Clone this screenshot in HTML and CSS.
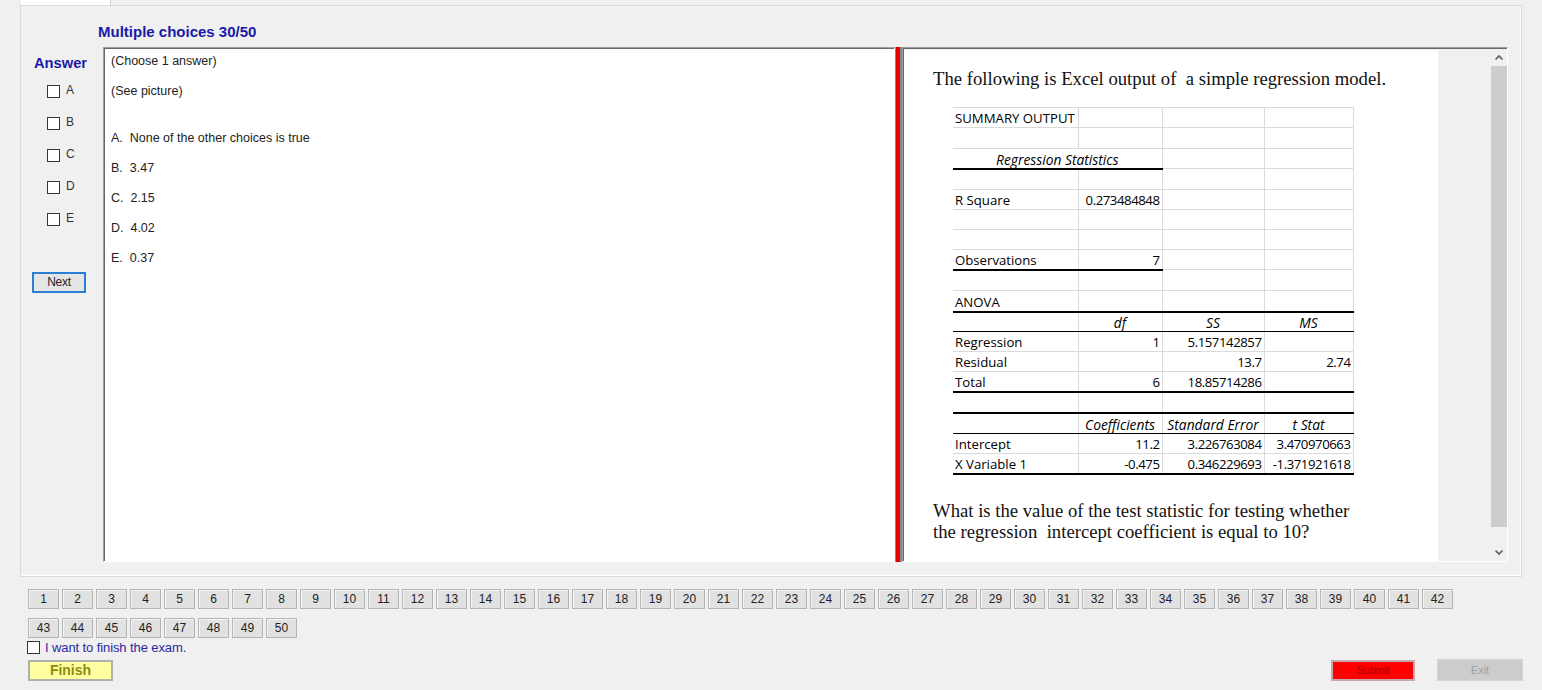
FILE: index.html
```html
<!DOCTYPE html>
<html>
<head>
<meta charset="utf-8">
<title>Exam</title>
<link rel="stylesheet" href="styles.css">
</head>
<body>
<div class="tabstrip"><div class="tab"></div></div>
<div class="group">
  <div class="title">Multiple choices 30/50</div>
  <div class="main">
    <div class="answer-col">
      <div class="answer-label">Answer</div>
      <div class="options">
        <div class="opt"><span class="box"></span><span class="opt-label">A</span></div>
        <div class="opt"><span class="box"></span><span class="opt-label">B</span></div>
        <div class="opt"><span class="box"></span><span class="opt-label">C</span></div>
        <div class="opt"><span class="box"></span><span class="opt-label">D</span></div>
        <div class="opt"><span class="box"></span><span class="opt-label">E</span></div>
      </div>
      <div class="next">Next</div>
    </div>
    <div class="textbox">
      <div class="line">(Choose 1 answer)</div>
      <div class="line">(See picture)</div>
      <div class="line first-choice">A.&nbsp; None of the other choices is true</div>
      <div class="line">B.&nbsp; 3.47</div>
      <div class="line">C.&nbsp; 2.15</div>
      <div class="line">D.&nbsp; 4.02</div>
      <div class="line">E.&nbsp; 0.37</div>
    </div>
    <div class="divider"></div>
    <div class="pane">
      <div class="sheet">
        <p class="intro">The following is Excel output of&nbsp; a simple regression model.</p>
        <table class="xl">
          <colgroup><col class="c0"><col class="c1"><col class="c2"><col class="c3"></colgroup>
          <tr><td>SUMMARY OUTPUT</td><td></td><td></td><td></td></tr>
          <tr class="h21"><td class="tb2"></td><td class="tb2"></td><td></td><td></td></tr>
          <tr><td colspan="2" class="hd bb2">Regression Statistics</td><td></td><td></td></tr>
          <tr class="h21"><td></td><td></td><td></td><td></td></tr>
          <tr><td>R Square</td><td class="num">0.273484848</td><td></td><td></td></tr>
          <tr><td></td><td></td><td></td><td></td></tr>
          <tr><td></td><td></td><td></td><td></td></tr>
          <tr><td class="bb2">Observations</td><td class="num bb2">7</td><td></td><td></td></tr>
          <tr class="h21"><td></td><td></td><td></td><td></td></tr>
          <tr class="h21"><td class="bb2">ANOVA</td><td class="bb2"></td><td class="bb2"></td><td class="bb2"></td></tr>
          <tr><td class="bb1"></td><td class="hd bb1">df</td><td class="hd bb1">SS</td><td class="hd bb1">MS</td></tr>
          <tr><td>Regression</td><td class="num">1</td><td class="num">5.157142857</td><td></td></tr>
          <tr><td>Residual</td><td></td><td class="num">13.7</td><td class="num">2.74</td></tr>
          <tr><td class="bb2">Total</td><td class="num bb2">6</td><td class="num bb2">18.85714286</td><td class="bb2"></td></tr>
          <tr class="h21"><td class="bb2"></td><td class="bb2"></td><td class="bb2"></td><td class="bb2"></td></tr>
          <tr class="h21"><td class="bb1"></td><td class="hd bb1">Coefficients</td><td class="hd bb1">Standard Error</td><td class="hd bb1">t Stat</td></tr>
          <tr><td>Intercept</td><td class="num">11.2</td><td class="num">3.226763084</td><td class="num">3.470970663</td></tr>
          <tr><td class="bb2">X Variable 1</td><td class="num bb2">-0.475</td><td class="num bb2">0.346229693</td><td class="num bb2">-1.371921618</td></tr>
        </table>
        <p class="question">What is the value of the test statistic for testing whether<br>the regression&nbsp; intercept coefficient is equal to 10?</p>
      </div>
      <div class="pane-gap"></div>
      <div class="scrollbar">
        <div class="arrow">
          <svg width="16" height="17" viewBox="0 0 16 17"><polyline points="4.5,10.5 8,7 11.5,10.5" fill="none" stroke="#606060" stroke-width="1.7"/></svg>
        </div>
        <div class="thumb"></div>
        <div class="track"></div>
        <div class="arrow">
          <svg width="16" height="17" viewBox="0 0 16 17"><polyline points="4.5,6.5 8,10 11.5,6.5" fill="none" stroke="#606060" stroke-width="1.7"/></svg>
        </div>
      </div>
    </div>
  </div>
</div>
<div class="numbers">
  <div class="nb">1</div><div class="nb">2</div><div class="nb">3</div><div class="nb">4</div><div class="nb">5</div><div class="nb">6</div><div class="nb">7</div><div class="nb">8</div><div class="nb">9</div><div class="nb">10</div>
  <div class="nb">11</div><div class="nb">12</div><div class="nb">13</div><div class="nb">14</div><div class="nb">15</div><div class="nb">16</div><div class="nb">17</div><div class="nb">18</div><div class="nb">19</div><div class="nb">20</div>
  <div class="nb">21</div><div class="nb">22</div><div class="nb">23</div><div class="nb">24</div><div class="nb">25</div><div class="nb">26</div><div class="nb">27</div><div class="nb">28</div><div class="nb">29</div><div class="nb">30</div>
  <div class="nb">31</div><div class="nb">32</div><div class="nb">33</div><div class="nb">34</div><div class="nb">35</div><div class="nb">36</div><div class="nb">37</div><div class="nb">38</div><div class="nb">39</div><div class="nb">40</div>
  <div class="nb">41</div><div class="nb">42</div><div class="nb">43</div><div class="nb">44</div><div class="nb">45</div><div class="nb">46</div><div class="nb">47</div><div class="nb">48</div><div class="nb">49</div><div class="nb">50</div>
</div>
<div class="finish-check"><span class="box"></span><span class="finish-text">I want to finish the exam.</span></div>
<div class="actions">
  <div class="finish">Finish</div>
  <div class="spacer"></div>
  <div class="submit">Submit</div>
  <div class="exit">Exit</div>
</div>
</body>
</html>
```
FILE: styles.css
```css
* { box-sizing: border-box; }
html, body { margin: 0; padding: 0; }
body {
  width: 1542px;
  height: 690px;
  overflow: hidden;
  background: #f0f0f0;
  font-family: "Liberation Sans", Arial, sans-serif;
  font-size: 12.5px;
  color: #222;
}
.tabstrip { height: 5px; }
.tab {
  margin-left: 21px;
  width: 90px;
  height: 5px;
  background: #ffffff;
  border-right: 1px solid #d0d0d0;
}
.group {
  margin-left: 20px;
  width: 1502px;
  height: 572px;
  border: 1px solid #d9d9d9;
  box-shadow: inset -1px -1px 0 #ffffff;
  padding-top: 17px;
}
.title {
  padding-left: 77px;
  font-weight: bold;
  font-size: 15px;
  line-height: 18px;
  color: #1a1aa8;
}
.main {
  display: flex;
  margin-top: 6px;
  height: 515px;
}
.answer-col {
  width: 82px;
  flex: none;
  display: flex;
  flex-direction: column;
}
.answer-label {
  margin-top: 7px;
  padding-left: 13px;
  font-weight: bold;
  font-size: 14.7px;
  line-height: 18px;
  color: #1a1aa8;
}
.options {
  margin-top: 13px;
  display: flex;
  flex-direction: column;
  gap: 19px;
  padding-left: 26px;
}
.opt {
  display: flex;
  align-items: center;
  height: 13px;
}
.box {
  display: inline-block;
  width: 13px;
  height: 13px;
  border: 1px solid #333;
  background: #fff;
  flex: none;
}
.opt-label {
  margin-left: 6px;
  font-size: 12px;
  color: #333;
  position: relative;
  top: -2px;
}
.next {
  margin-top: 46px;
  margin-left: 11px;
  width: 54px;
  height: 21px;
  border: 2px solid #2a7fd4;
  background: #e5e5e5;
  font-size: 12px;
  line-height: 17px;
  text-align: center;
  color: #222;
  letter-spacing: -0.3px;
}
.textbox {
  width: 792px;
  flex: none;
  background: #fff;
  border-top: 1px solid #a0a0a0;
  border-left: 1px solid #a0a0a0;
  border-right: 1px solid #ffffff;
  border-bottom: 1px solid #ffffff;
  box-shadow: inset 1px 1px 0 #696969;
  padding: 5px 0 0 7px;
}
.line {
  line-height: 16px;
  height: 16px;
  margin-bottom: 14px;
  color: #222;
}
.line.first-choice { margin-top: 31px; }
.divider {
  width: 7px;
  flex: none;
  background: #e60000;
  border-left: 1px solid #8a8a8a;
  border-right: 2px solid #8a8a8a;
}
.pane {
  width: 606px;
  flex: none;
  display: flex;
  border-top: 1px solid #a0a0a0;
  border-left: 1px solid #a0a0a0;
  border-right: 1px solid #ffffff;
  border-bottom: 1px solid #ffffff;
  box-shadow: inset 1px 1px 0 #696969;
  padding: 2px 0 0 1px;
  background: #f0f0f0;
}
.sheet {
  width: 534px;
  flex: none;
  background: #fff;
  padding: 18px 0 0 29px;
  overflow: hidden;
  font-family: "Liberation Serif", "Times New Roman", serif;
  color: #111;
}
.intro {
  margin: 0;
  font-size: 18.7px;
  line-height: 21px;
}
.question {
  margin: 25px 0 0 0;
  font-size: 18.7px;
  line-height: 21px;
}
.pane-gap { flex: 1; }
.scrollbar {
  width: 16px;
  flex: none;
  display: flex;
  flex-direction: column;
  background: #f0f0f0;
  margin-top: -1px;
}
.arrow { height: 17px; flex: none; display: flex; }
.thumb { height: 461px; flex: none; background: #cdcdcd; }
.track { flex: 1; }

table.xl {
  margin: 18px 0 0 20px;
  border-collapse: collapse;
  table-layout: fixed;
  width: 400px;
  font-family: "Open Sans", "Liberation Sans", sans-serif;
  font-size: 13.2px;
  color: #000;
}
col.c0 { width: 125px; }
col.c1 { width: 84px; }
col.c2 { width: 102px; }
col.c3 { width: 89px; }
table.xl tr { height: 20px; }
table.xl tr.h21 { height: 21px; }
table.xl td {
  border: 1px solid #dadada;
  padding: 0 2px;
  line-height: 17px;
  white-space: nowrap;
  overflow: hidden;
  vertical-align: bottom;
}
table.xl td:first-child { border-left: none; }
table.xl td.num { text-align: right; letter-spacing: -0.45px; }
table.xl td.hd { text-align: center; font-style: italic; font-size: 13.8px; }
table.xl td.bb2 { border-bottom: 2px solid #000; }
table.xl td.bb1 { border-bottom: 1px solid #000; }

.numbers {
  margin-top: 12px;
  margin-left: 28px;
  width: 1440px;
  display: flex;
  flex-wrap: wrap;
  column-gap: 3px;
  row-gap: 8.5px;
}
.nb {
  width: 31px;
  height: 20px;
  background: #e1e1e1;
  border: 1px solid #b4b4b4;
  box-shadow: inset 1px 1px 0 #f4f4f4;
  font-size: 12px;
  line-height: 18px;
  text-align: center;
  color: #222;
}
.finish-check {
  margin-top: 3px;
  margin-left: 27px;
  display: flex;
  align-items: center;
  height: 13px;
}
.finish-text {
  margin-left: 5px;
  color: #2a2aa0;
  font-size: 13px;
  letter-spacing: -0.1px;
}
.actions {
  margin-top: 5px;
  margin-left: 28px;
  width: 1495px;
  display: flex;
  align-items: flex-start;
}
.finish {
  margin-top: 1px;
  width: 85px;
  height: 21px;
  background: #ffffa0;
  border: 2px solid #b0b0b0;
  font-weight: bold;
  font-size: 14px;
  line-height: 17px;
  text-align: center;
  color: #8c8c10;
}
.spacer { flex: 1; }
.submit {
  margin-top: 1px;
  width: 84px;
  height: 21px;
  background: #ff0000;
  border: 2px solid #c8a8a8;
  font-size: 11px;
  line-height: 17px;
  text-align: center;
  color: #a00000;
  letter-spacing: -0.3px;
}
.exit {
  margin-left: 22px;
  width: 86px;
  height: 22px;
  background: #cccccc;
  border: 1px solid #d4d4d4;
  font-size: 11px;
  line-height: 20px;
  text-align: center;
  color: #a0a0a0;
}
```
